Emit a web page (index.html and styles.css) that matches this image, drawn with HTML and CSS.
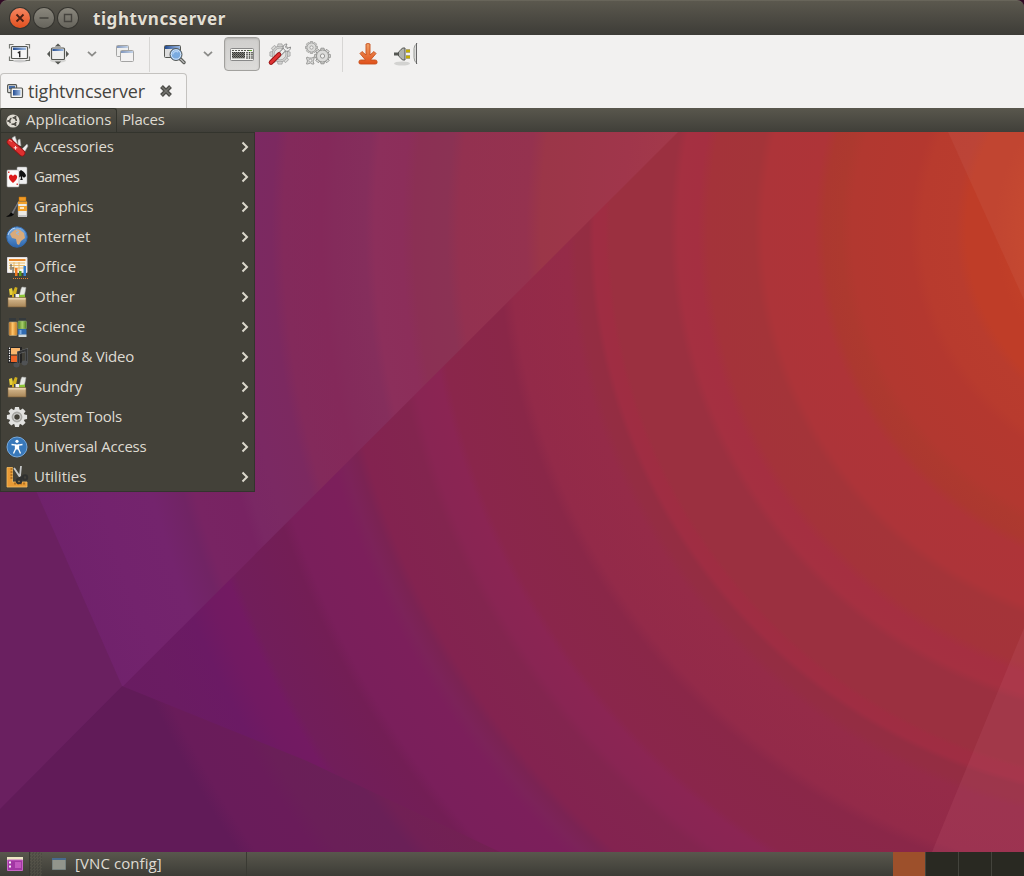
FILE: index.html
```html
<!DOCTYPE html>
<html lang="en">
<head>
<meta charset="utf-8">
<title>tightvncserver</title>
<link rel="stylesheet" href="styles.css">
</head>
<body>
<svg class="defs" width="0" height="0" aria-hidden="true">
<defs>
<linearGradient id="blue" x1="0" x2="1" y1="0" y2="0"><stop offset="0" stop-color="#244c91"/><stop offset="1" stop-color="#9fbce4"/></linearGradient>
<linearGradient id="org" x1="0" x2="0" y1="0" y2="1"><stop offset="0" stop-color="#f0a066"/><stop offset="1" stop-color="#e0501a"/></linearGradient>
<linearGradient id="box" x1="0" x2="0" y1="0" y2="1"><stop offset="0" stop-color="#d9bd93"/><stop offset="1" stop-color="#a78557"/></linearGradient>
<linearGradient id="ball" x1="0" x2="0" y1="0" y2="1"><stop offset="0" stop-color="#7db0e6"/><stop offset="1" stop-color="#2c66ae"/></linearGradient>
<linearGradient id="jar1" x1="0" x2="1" y1="0" y2="0"><stop offset="0" stop-color="#b96a14"/><stop offset=".45" stop-color="#ffc76e"/><stop offset="1" stop-color="#c97a1c"/></linearGradient>
<linearGradient id="jar2" x1="0" x2="1" y1="0" y2="0"><stop offset="0" stop-color="#4b7a1c"/><stop offset=".5" stop-color="#a8d06a"/><stop offset="1" stop-color="#4b7a1c"/></linearGradient>
<symbol id="arrow" viewBox="0 0 8 12"><path d="M1.500 1.500 6 6 1.500 10.500" fill="none" stroke="#dcd8cc" stroke-width="2"/></symbol>
<symbol id="chev" viewBox="0 0 12 8"><path d="M2 1.800 6 5.600 10 1.800" fill="none" stroke="#8b8b88" stroke-width="1.800"/></symbol>
<symbol id="gear" viewBox="-12 -12 24 24">
<g><path id="tooth" d="M-2.200-11h4.400l.7 4h-5.800z"/><use href="#tooth" transform="rotate(45)"/><use href="#tooth" transform="rotate(90)"/><use href="#tooth" transform="rotate(135)"/><use href="#tooth" transform="rotate(180)"/><use href="#tooth" transform="rotate(225)"/><use href="#tooth" transform="rotate(270)"/><use href="#tooth" transform="rotate(315)"/></g>
<path fill-rule="evenodd" d="M0-8.500A8.500 8.500 0 1 0 0 8.500 8.500 8.500 0 1 0 0-8.500M0-3A3 3 0 1 1 0 3 3 3 0 1 1 0-3"/></symbol>
<symbol id="toolbox" viewBox="0 0 22 22">
<path d="m3 3 3-1 2 9H4z" fill="#e6cf3a"/><path d="m6 8 3-7 2.500.8L9 13H5z" fill="#d1b01e"/><path d="m13 11 2-8 1-2 4 .5-2 10z" fill="#e6e8e4" stroke="#aaa" stroke-width=".5"/><path d="M9 8h4v4H9z" fill="#f2f2ee"/><path d="m13 9 6-.5V12h-6z" fill="#8dc63a"/><path d="M4 9h2v3H4zM8 8h1.500v4H8z" fill="#444"/>
<path d="M2 11.500h18v9.500H2z" fill="url(#box)" stroke="#7a5f3a" stroke-width=".6"/><path d="M2.500 12h17v1.500h-17z" fill="#e7d1ae"/></symbol>
</defs>
</svg>
<div class="window">
<header class="title">
<span class="btn close"><svg width="20" height="20"><path d="m6.500 6.500 7 7m0-7-7 7" stroke="#472015" stroke-width="1.800"/></svg></span>
<span class="btn"><svg width="20" height="20"><path d="M5.500 10h9" stroke="#45433e" stroke-width="1.600"/></svg></span>
<span class="btn"><svg width="20" height="20"><path d="M6.500 6.500h7v7h-7z" fill="none" stroke="#45433e" stroke-width="1.400"/></svg></span>
<h1>tightvncserver</h1>
</header>
<nav class="toolbar">
<span class="tool t1"><svg width="24" height="24"><ellipse cx="12" cy="19" rx="7" ry="1.500" fill="#ccc"/><path d="M1.500 6.500V2.500h4M17.500 2.500h4v4M21.500 14.500v4h-4M5.500 18.500h-4v-4" fill="none" stroke="#777974" stroke-width="1.200"/><rect x="3.500" y="4.500" width="16" height="12" rx="1" fill="#f6f6f6" stroke="#555753" stroke-width="1.200"/><path d="M5 5.500h13V8H5z" fill="url(#blue)"/><path d="m9.800 10.800 1.900-1v5.400" fill="none" stroke="#222" stroke-width="1.400"/></svg></span>
<span class="tool t2"><svg width="24" height="24"><ellipse cx="12" cy="18.500" rx="8" ry="2" fill="#d4d4d2"/><path d="m12 1.500 3.200 3H8.800zM12 22.500l3.200-3H8.800zM1 12l3-3.200v6.400zM23 12l-3-3.200v6.400z" fill="#555753"/><rect x="5.500" y="6" width="13" height="11.500" rx="1" fill="#eee" stroke="#555753" stroke-width="1.200"/><path d="M6.500 7h11v2h-11z" fill="url(#blue)"/></svg></span>
<svg class="t3" width="12" height="8"><use href="#chev"/></svg>
<span class="tool t4"><svg width="24" height="24"><g opacity=".55"><rect x="3.500" y="3.500" width="12" height="11" rx="1" fill="#eee" stroke="#666"/><path d="M4 4h11v2H4z" fill="url(#blue)"/><rect x="7.500" y="8.500" width="13" height="11" rx="1" fill="#f4f4f4" stroke="#666"/><path d="M8 9h12v2H8z" fill="url(#blue)"/></g></svg></span>
<i class="sep s1"></i>
<span class="tool t5"><svg width="24" height="24"><rect x="2.500" y="3.500" width="16" height="12" rx="1" fill="#ddd" stroke="#555753"/><path d="M3 4h15v3H3z" fill="url(#blue)"/><path d="m18.500 17 3.500 3.500" stroke="#555753" stroke-width="3.400" stroke-linecap="round"/><path d="m18.500 17 3.500 3.500" stroke="#bbb" stroke-width="1.300" stroke-linecap="round"/><circle cx="14" cy="12.500" r="6" fill="#7fb1e8" stroke="#555753"/><circle cx="14" cy="12.500" r="4.700" fill="#7aabe0" stroke="#d6e6f8" stroke-width="1"/><path d="M10.800 12.500a3.200 3.200 0 0 1 5.500-2.200" fill="none" stroke="#b0d0f4" stroke-width="1.300"/></svg></span>
<svg class="t6" width="12" height="8"><use href="#chev"/></svg>
<span class="key"><svg width="26" height="16"><rect x="1.500" y="2.500" width="23" height="12" rx="1" fill="#f3f3ef" stroke="#888"/><path d="M3 4.500h8M12 4.500h10" stroke="#55564f" stroke-width="1" stroke-dasharray="2 1"/><path d="M3 6h13v6.500H3z" fill="#8d8e89"/><path d="M3 6.500h13M3 8.500h13M3 10.500h13" stroke="#33342f" stroke-width="1" stroke-dasharray="1.200 .8"/><path d="M4 7.500h12M4 9.500h12M4 11.500h12" stroke="#4b4c46" stroke-width="1" stroke-dasharray="1.200 .8"/><path d="M18 6v7M20.500 6v7M23 6v7" stroke="#42433e" stroke-width="1.500" stroke-dasharray="1.500 .6"/><path d="M20 4.500h3" stroke="#63a32c"/></svg></span>
<span class="tool t7"><svg width="24" height="24"><use href="#gear" x="1" y="1" width="22" height="22" fill="#d9d9d7" stroke="#999" stroke-width=".8"/><circle cx="12" cy="12" r="6" fill="#e4e4e2" stroke="#aaa"/><path d="m9 15 8-8" stroke="#777" stroke-width="4"/><path d="m9 15 8-8" stroke="#f0f0ee" stroke-width="2.500"/><path d="M15 6c0-3 2-4 4-4l-1.500 3 1.500 1.500L22.500 5c0 3-2 5-5 4z" fill="#eee" stroke="#777" stroke-width=".8"/><path d="m3 20.500 8-8" stroke="#991414" stroke-width="4.600" stroke-linecap="round"/><path d="m3 20.500 8-8" stroke="#df3333" stroke-width="2.800" stroke-linecap="round"/></svg></span>
<span class="tool t8"><svg width="26" height="26"><g fill="#dcdcda" stroke="#8f8f8d" stroke-width="1.300"><use href="#gear" x="0" y="0" width="13" height="13"/><use href="#gear" x="9" y="6" width="17" height="18"/></g><path d="m2 16 2 1h3l2-1v2l-1 2 1 3-2 0-1.500-1-3 1H1.500l1-3-1-3z" fill="#dcdcda" stroke="#9b9b99"/><circle cx="5.300" cy="19.600" r="1.500" fill="#f2f1f0" stroke="#999" stroke-width=".8"/></svg></span>
<i class="sep s2"></i>
<span class="tool t9"><svg width="24" height="24"><path d="M10 2q2-1 4 0v11l4-3.500 2 2L14.500 18H19q2 0 2 1.500V21q0 1-2 1H5q-2 0-2-1v-1.500Q3 18 5 18h4.500L4 11.500l2-2L10 13z" fill="url(#org)" stroke="#c6501c" stroke-width=".9"/></svg></span>
<span class="tool t10"><svg width="28" height="26"><ellipse cx="10" cy="22.500" rx="8" ry="2" fill="#d3d3d1"/><path d="M2 13h6" stroke="#555753" stroke-width="3"/><path d="M6.500 11q2-1.500 4-4h2.500v12h-2.500q-2-2.500-4-4z" fill="#b0b2ad" stroke="#555753"/><path d="M14 10h4M14 16h4" stroke="#715f00" stroke-width="3"/><path d="M14 10h4M14 16h4" stroke="#dfc900" stroke-width="1.400"/><path d="M25 2.500q-3 2-3 5v9q0 4 3 6" fill="#dcdcda" stroke="#9a9c98" stroke-width="1"/><path d="M24.500 2v21" stroke="#666" stroke-width="1"/></svg></span>
</nav>
<div class="tabs"><div class="tab">
<svg width="17" height="16"><rect x=".6" y="1.600" width="9" height="8" rx="1" fill="#ddd" stroke="#555753" stroke-width="1.100"/><path d="M2 3h6v3H2z" fill="#416cac"/><rect x="4" y="5" width="11.500" height="9.500" rx="1" fill="#f5f5f3" stroke="#555753" stroke-width="1.200"/><path d="M6 7h7.500v5.500H6z" fill="url(#blue)"/></svg>
<span class="tabname">tightvncserver</span>
<svg class="x" width="14" height="14"><path d="m2.500 2.500 9 9m0-9-9 9" stroke="#4b4b47" stroke-width="4"/><path d="m3 3 8 8m0-8-8 8" stroke="#74746f" stroke-width="1.500"/></svg>
</div></div>
<div class="panel"><div class="apps"><svg width="14" height="14"><circle cx="7" cy="7" r="6.600" fill="#dfdbd2"/><circle cx="7" cy="7" r="3.300" fill="none" stroke="#4a4841" stroke-width="1.500" stroke-dasharray="5.600 1.300" stroke-dashoffset="-1"/><g fill="#4a4841"><circle cx="2.300" cy="7" r="1.100"/><circle cx="9.400" cy="2.900" r="1.100"/><circle cx="9.400" cy="11.100" r="1.100"/></g></svg><span class="w-app">Applications</span></div><span class="w-pla">Places</span></div>
<main class="desktop">
<svg class="paper" viewBox="0 132 1024 720" width="1024" height="720">
<defs>
<radialGradient id="ga" gradientUnits="userSpaceOnUse" cx="1162" cy="230" r="1200">
<stop offset="0" stop-color="#c54228"/><stop offset=".115" stop-color="#c34128"/><stop offset=".14" stop-color="#bf3d28"/><stop offset=".163" stop-color="#bf3d28"/><stop offset=".172" stop-color="#b93c2e"/><stop offset=".2" stop-color="#b83b2e"/><stop offset=".21" stop-color="#b4382f"/><stop offset=".258" stop-color="#b23830"/><stop offset=".268" stop-color="#ad392f"/><stop offset=".281" stop-color="#ac3830"/><stop offset=".29" stop-color="#ae3438"/><stop offset=".332" stop-color="#ad3439"/><stop offset=".34" stop-color="#a43439"/><stop offset=".378" stop-color="#a4333a"/><stop offset=".387" stop-color="#a52f41"/><stop offset=".403" stop-color="#a53041"/><stop offset=".41" stop-color="#9b3040"/><stop offset=".46" stop-color="#9b3040"/><stop offset=".464" stop-color="#9f2d42"/><stop offset=".473" stop-color="#9f2d43"/><stop offset=".478" stop-color="#942d42"/><stop offset=".488" stop-color="#942d43"/><stop offset=".496" stop-color="#952b48"/><stop offset=".543" stop-color="#932a49"/><stop offset=".553" stop-color="#8a2748"/><stop offset=".607" stop-color="#8a264b"/><stop offset=".614" stop-color="#8b2553"/><stop offset=".636" stop-color="#892553"/><stop offset=".645" stop-color="#83254f"/><stop offset=".689" stop-color="#832350"/><stop offset=".697" stop-color="#7b2353"/><stop offset=".708" stop-color="#7c2359"/><stop offset=".718" stop-color="#7c1f5b"/><stop offset=".763" stop-color="#7a1f5b"/><stop offset=".773" stop-color="#731e55"/><stop offset=".823" stop-color="#711e5a"/><stop offset=".831" stop-color="#731a62"/><stop offset=".85" stop-color="#711a62"/><stop offset=".87" stop-color="#6b1a64"/><stop offset=".91" stop-color="#6a1c62"/><stop offset="1" stop-color="#671c60"/></radialGradient>
<radialGradient id="gb" gradientUnits="userSpaceOnUse" cx="1162" cy="230" r="1200">
<stop offset=".4" stop-color="#a43a4a"/><stop offset=".45" stop-color="#a0364b"/><stop offset=".518" stop-color="#9b3648"/><stop offset=".53" stop-color="#95324f"/><stop offset=".586" stop-color="#933150"/><stop offset=".596" stop-color="#8b3254"/><stop offset=".623" stop-color="#8b3054"/><stop offset=".633" stop-color="#8c2e5a"/><stop offset=".656" stop-color="#8c2f5b"/><stop offset=".664" stop-color="#852e5c"/><stop offset=".69" stop-color="#842b5b"/><stop offset=".7" stop-color="#84295a"/><stop offset=".732" stop-color="#832a5b"/><stop offset=".742" stop-color="#7c2960"/><stop offset=".77" stop-color="#7b2963"/><stop offset=".79" stop-color="#7a2864"/><stop offset=".8" stop-color="#782362"/><stop offset=".835" stop-color="#782463"/><stop offset=".845" stop-color="#712464"/><stop offset=".87" stop-color="#74246d"/><stop offset=".91" stop-color="#73236d"/><stop offset="1" stop-color="#6d216a"/></radialGradient>
<radialGradient id="gc" gradientUnits="userSpaceOnUse" cx="1162" cy="230" r="1200"><stop offset=".75" stop-color="#732152"/><stop offset=".8" stop-color="#712055"/><stop offset=".812" stop-color="#6a2057"/><stop offset=".86" stop-color="#6a1f58"/><stop offset=".875" stop-color="#6a1c5a"/><stop offset=".915" stop-color="#691c5a"/><stop offset=".928" stop-color="#611b58"/><stop offset="1" stop-color="#611b58"/></radialGradient>
</defs>
<path fill="url(#ga)" d="M0 132h1024v720H0z"/>
<path fill="url(#gb)" d="M0 132h678L0 809z"/>
<path fill="#6a2060" d="M0 409 122 686 0 809z"/>
<path fill="url(#gc)" d="m122 686 185 75 193 91H0v-43z"/>
<path fill="#fff" fill-opacity=".045" d="M948 132h76v168z"/>
<path fill="#d16c80" fill-opacity=".15" d="M1024 628v224h-92z"/>
</svg>
<ul class="menu">
<li><svg class="ic" viewBox="0 0 22 22"><path d="M8 8 6 2l3-2 3 9M12 9l0-5 2-1 1 7M15 14l6-6 1 2-4 7" fill="#eee" stroke="#999" stroke-width=".6"/><path d="m4 6 12 11" stroke="#961414" stroke-width="6.500" stroke-linecap="round"/><path d="m4 6 12 11" stroke="#de3030" stroke-width="5" stroke-linecap="round"/><path d="M9.500 10v3.600m-1.800-1.800h3.600" stroke="#ffd9d4" stroke-width="1"/><path d="m3 4 3 1.500" stroke="#ff9e91" stroke-width="1"/></svg><span class="w1">Accessories</span><svg class="ar"><use href="#arrow"/></svg></li>
<li><svg class="ic" viewBox="0 0 22 22"><rect x="11" y="1" width="10" height="17" rx="1" fill="#eee" stroke="#999" stroke-width=".5"/><path d="M15 4q-7 5-3 7 2 1 3-1 0 3-1 4h3q-1-1-1-4 2 3 4 0 0-3-5-6" fill="#111"/><rect x="1" y="4" width="12" height="17" rx="1" fill="#fbfbfa" stroke="#aaa" stroke-width=".6"/><path d="M7 17q-5-4-4-7 2-3 4 0 2-3 4 0 1 3-4 7" fill="#dc1b1b"/><path d="M2 5.500h1.500V7H2zM10.500 17.500H12V19h-1.500z" fill="#dd4444"/></svg><span class="w2">Games</span><svg class="ar"><use href="#arrow"/></svg></li>
<li><svg class="ic" viewBox="0 0 22 22"><path d="M12 5 5 17l2 2 6-12z" fill="#77777a" stroke="#333" stroke-width=".7"/><path d="M0 20.500q3-.5 5-4l3 2q-3 3-8 2" fill="#080808"/><path d="M13 1h7v4h-7z" fill="#f29b24" stroke="#b86b0b" stroke-width=".5"/><path d="M12 6h9v14h-9z" fill="#eceae4" stroke="#888" stroke-width=".6"/><path d="M12 5.500h9v2.500h-9zM12 10h9v5h-9z" fill="#f2a22d"/><path d="M14 11h4v2h-4z" fill="#ffe8bb"/><path d="M12 19h9v2h-9z" fill="#c5c5c5"/></svg><span class="w3">Graphics</span><svg class="ar"><use href="#arrow"/></svg></li>
<li><svg class="ic" viewBox="0 0 22 22"><circle cx="11" cy="11" r="10.200" fill="url(#ball)" stroke="#326ab0"/><path d="M6 6q4-4 8-2l4 3 1 5-4 3-2 4-2-1-1-5-4-1-2-4z" fill="#d9aa7a"/><path d="m10 4 3 2-3 1 3 2" stroke="#95b8de" fill="none"/><path d="M2 9q2-6 7-7" stroke="#bcd8f6" fill="none"/></svg><span class="w4">Internet</span><svg class="ar"><use href="#arrow"/></svg></li>
<li><svg class="ic" viewBox="0 0 22 22"><path d="M1.500 1.500h19.500v15H1.500z" fill="#fbf6ea" stroke="#dedbe4"/><path d="M3 3h16.500v2H3z" fill="#e8892d"/><path d="M3 7h16M3 9.500h16M3 12h16M8 6v9M13 6v9" stroke="#e7b45f" stroke-width=".9"/><path d="M5 8v6M7 11v6" stroke="#444"/><path d="M9 12h2.500v8H9z" fill="#ef7b22"/><path d="M13 15h2.500v5H13z" fill="#579f23"/><path d="M17.500 10h2.500v10h-2.500z" fill="#347fd0"/><path d="M7 22.500h15" stroke="#e38235" stroke-dasharray="1 1"/></svg><span class="w5">Office</span><svg class="ar"><use href="#arrow"/></svg></li>
<li><svg class="ic"><use href="#toolbox"/></svg><span class="w6">Other</span><svg class="ar"><use href="#arrow"/></svg></li>
<li><svg class="ic" viewBox="0 0 22 22"><path d="M3 2h7v4H3zM13 2h7v3h-7z" fill="#34393c"/><rect x="3" y="6" width="8" height="13.500" rx="1" fill="url(#jar1)" stroke="#b9a983" stroke-width=".6"/><rect x="12" y="5" width="8.500" height="8" rx="1" fill="url(#jar2)" stroke="#8ba57a" stroke-width=".6"/><rect x="12" y="13" width="8.500" height="6" rx="1" fill="#316bb0"/><path d="M14.500 14v4" stroke="#78a9df" stroke-width="2"/><path d="M12.500 18.500h8v2.500h-8z" fill="#d1d8d9"/></svg><span class="w7">Science</span><svg class="ar"><use href="#arrow"/></svg></li>
<li><svg class="ic" viewBox="0 0 22 22"><path d="M2 1h14v16H2z" fill="#242424"/><path d="M3.500 1.500v15" stroke="#eee" stroke-width="1.200" stroke-dasharray="1.500 1"/><path d="M5 2h9v6.500H5z" fill="#f9b66d"/><path d="M5 9.500h9V16H5z" fill="#ef6427"/><path d="M12.500 18V6.500l8-2.500v13" fill="none" stroke="#77797a" stroke-width="3"/><path d="M12.500 18V6.500l8-2.500v13" fill="none" stroke="#333435" stroke-width="2.200"/><ellipse cx="10.500" cy="19" rx="3" ry="2.400" fill="#505254"/><ellipse cx="18.500" cy="17" rx="3" ry="2.400" fill="#505254"/></svg><span class="w8">Sound &amp; Video</span><svg class="ar"><use href="#arrow"/></svg></li>
<li><svg class="ic"><use href="#toolbox"/></svg><span class="w9">Sundry</span><svg class="ar"><use href="#arrow"/></svg></li>
<li><svg class="ic"><use href="#gear" fill="#e1e1df"/><circle cx="11" cy="11" r="4.500" fill="none" stroke="#a8a8a4" stroke-width="1.800"/></svg><span class="w10">System Tools</span><svg class="ar"><use href="#arrow"/></svg></li>
<li><svg class="ic" viewBox="0 0 22 22"><circle cx="11" cy="11" r="10" fill="#3878ba" stroke="#77a9dc"/><circle cx="11" cy="5.300" r="1.600" fill="#fff"/><path d="m5.500 8.500 4 .5v4l-2 4.500M16.500 8.500l-4 .5v4l2 4.500" fill="none" stroke="#fff" stroke-width="1.300"/><path d="M9 8.500h4v5H9z" fill="#fff"/></svg><span class="w11">Universal Access</span><svg class="ar"><use href="#arrow"/></svg></li>
<li><svg class="ic" viewBox="0 0 22 22"><path d="M1 1.500h5.500V16H21v5H1z" fill="#e99a35" stroke="#f3bd62" stroke-width=".8"/><path d="M6.500 3H4.500M6.500 6H4.500M6.500 9H4.500M6.500 12H4.500M9 16.500v2M12 16.500v2M15 16.500v2M18 16.500v2" stroke="#7d4a11"/><path d="m8 2 6 9M15 0l-1 10" stroke="#c7c9c9" stroke-width="1.800"/><circle cx="13" cy="15" r="2.200" fill="none" stroke="#303130" stroke-width="2"/><circle cx="19" cy="11.500" r="2.200" fill="none" stroke="#303130" stroke-width="2"/><path d="m13 12.500 5-1.500" stroke="#303130" stroke-width="2.500"/></svg><span class="w12">Utilities</span><svg class="ar"><use href="#arrow"/></svg></li>
</ul>
</main>
<footer class="taskbar">
<div class="show"><svg width="16" height="14"><path d="M0 0h16v3H0z" fill="#eee8c6"/><path d="M.5 3h15v10.500H.5z" fill="#a236a4" stroke="#c765c4"/><path d="M8 5h6v6H8z" fill="#c258bf"/><path d="M2 4.500h2v2H2zM2 8.500h2v2H2z" fill="#f5edf4"/></svg></div>
<i class="grip"></i>
<div class="task"><svg width="14" height="12"><path d="M.5.500h13v11H.5z" fill="#92958c" stroke="#77817f"/><path d="M0 0h14v2H0z" fill="#48698d"/></svg><span class="w-vnc">[VNC config]</span></div>
<div class="spaces"><i class="on"></i><i></i><i></i><i></i></div>
</footer>
</div>
</body>
</html>
```
FILE: styles.css
```css
* { box-sizing: border-box; }
body { margin: 0; background: #300a24; font-family: "Open Sans", "Noto Sans", sans-serif; font-size: 15px; overflow: hidden; }
svg { display: block; flex: none; overflow: visible; }
.defs { position: absolute; }
span { white-space: nowrap; }
.window { width: 1024px; height: 876px; display: flex; flex-direction: column; }
.title { height: 35px; flex: none; display: flex; align-items: center; gap: 4px; padding: 0 10px 0 10px; border-radius: 7px 7px 0 0; background: linear-gradient(#5b584e, #3d3c37); border-top: 1px solid #68655a; }
.btn { width: 20px; height: 20px; border-radius: 50%; background: linear-gradient(#8a877d, #66645c); box-shadow: 0 0 0 1px #35342f; }
.close { background: linear-gradient(#f48560, #e2501f); }
h1 { margin: 0 0 0 11px; color: #e3dfd4; font: bold 17px/24px "Noto Sans", sans-serif; letter-spacing: .58px; text-shadow: 0 -1px #33322e; padding-top: 1px; }
.toolbar { height: 38px; flex: none; display: flex; align-items: center; background: #f2f1f0; }
.tool { flex: none; }
.t1 { margin-left: 8px; }
.t2 { margin-left: 14px; }
.t3 { margin-left: 16px; }
.t4 { margin-left: 15px; }
.t5 { margin-left: 12px; }
.t6 { margin-left: 16px; }
.sep { width: 1px; height: 35px; background: #d7d6d4; flex: none; }
.s1 { margin-left: 12px; }
.s2 { margin-left: 11px; }
.key { width: 36px; height: 34px; margin-left: 10px; border: 1px solid #a2a19e; border-radius: 4px; background: linear-gradient(#cfcecc, #dddcda); box-shadow: inset 0 1px 2px #b1b0ad; display: flex; align-items: center; justify-content: center; }
.t7 { margin-left: 8px; }
.t8 { margin-left: 13px; }
.t9 { margin-left: 13px; }
.t10 { margin-left: 12px; }
.tabs { height: 35px; flex: none; background: #f2f1f0; display: flex; }
.tab { width: 187px; height: 35px; border: 1px solid #c4c2bf; border-bottom: 0; border-radius: 4px 4px 0 0; background: #f5f4f3; display: flex; align-items: center; padding-left: 6px; }
.tabname { margin-left: 4px; font-size: 18px; line-height: 24px; color: #45443f; letter-spacing: -.18px; }
.x { margin-left: 14px; }
.panel { height: 24px; flex: none; display: flex; align-items: center; color: #dfdbd2; background: linear-gradient(#59574d, #403f39); font-size: 15px; }
.panel span { padding-bottom: 2px; }
.apps { width: 117px; height: 24px; padding-left: 5px; border: 1px solid #33342d; border-bottom: 0; border-radius: 3px 3px 0 0; display: flex; align-items: center; gap: 6px; background: linear-gradient(#504e45, #41413a); }
.apps .w-app { padding-bottom: 3px; }
.w-pla { margin-left: 5px; letter-spacing: -.2px; }
.desktop { height: 720px; flex: none; position: relative; }
.menu { position: absolute; left: 0; top: 0; width: 255px; height: 360px; margin: 0; padding: 0 5px; list-style: none; background: #434139; border: 1px solid #33342d; color: #dfdbd2; }
.menu li { height: 30px; display: flex; align-items: center; padding-bottom: 2px; }
.menu span { padding-bottom: 2px; }
.ic { width: 22px; height: 22px; margin-right: 6px; }
.ar { width: 8px; height: 12px; margin-left: auto; }
.w1, .w10 { letter-spacing: -.12px; }
.w2 { letter-spacing: -.7px; }
.w3 { letter-spacing: -.3px; }
.w5 { letter-spacing: .2px; }
.w7 { letter-spacing: -.2px; }
.w8, .w9 { letter-spacing: -.22px; }
.w10 { letter-spacing: -.33px; }
.w11 { letter-spacing: -.2px; }
.taskbar { height: 24px; flex: none; display: flex; align-items: center; color: #dfdbd2; background: linear-gradient(#59574d, #3c3c36); }
.show { width: 30px; height: 24px; padding: 5px 0 0 7px; border-right: 1px solid #393831; }
.grip { width: 12px; height: 24px; background: repeating-conic-gradient(#59574c 0 25%, #45443d 0 50%) 0 0 / 3px 3px; opacity: .5; }
.task { width: 205px; height: 24px; display: flex; align-items: center; gap: 9px; padding-left: 10px; border-right: 1px solid #3a3a33; }
.w-vnc { padding-bottom: 2px; letter-spacing: .08px; }
.spaces { margin-left: auto; width: 131px; height: 24px; display: grid; grid-template-columns: 32px 32px 32px 32px; gap: 1px; background: #43433c; }
.spaces i { background: #292922; }
.spaces .on { background: #9d502b; }
```
